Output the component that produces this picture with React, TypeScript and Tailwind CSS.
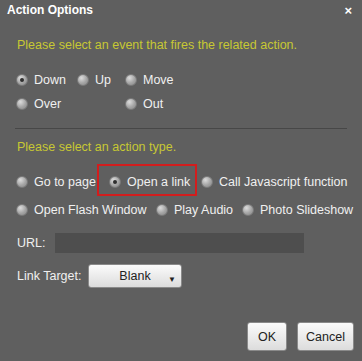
import React from "react";

function Radio({ checked = false }: { checked?: boolean }) {
  return (
    <span className="relative inline-flex h-[12px] w-[12px] shrink-0 items-center justify-center rounded-full border border-[#7a7a7a] bg-[radial-gradient(circle_at_35%_30%,#dcdcdc,#a4a4a4_55%,#858585)]">
      {checked && <span className="h-[4px] w-[4px] rounded-full bg-[#2e2e2e]" />}
    </span>
  );
}

function Option({ label, checked = false, className = "" }: { label: string; checked?: boolean; className?: string }) {
  return (
    <div className={`flex items-center gap-[6px] ${className}`}>
      <Radio checked={checked} />
      <span className="whitespace-nowrap">{label}</span>
    </div>
  );
}

const btn =
  "flex items-center justify-center rounded-[3px] border border-[#8a8a8a] bg-[linear-gradient(#fbfbfb,#dcdcdc)] text-[#222]";

export default function App() {
  return (
    <div className="relative flex h-[361px] w-[362px] flex-col bg-[#5f5f5f] font-['Liberation_Sans',Arial,sans-serif] text-[12.5px] leading-[16px] text-[#f0f0f0]">
      <div className="flex h-[20px] items-center justify-between pl-[7px] pr-[10px]">
        <span className="text-[12px] font-bold text-white">Action Options</span>
        <span className="text-[13px] font-bold leading-none text-white">×</span>
      </div>

      <div className="mt-[17px] pl-[17px] text-[#c7c833]">Please select an event that fires the related action.</div>

      <div className="mt-[19px] grid grid-cols-[61px_48px_auto] gap-y-[8px] pl-[16px]">
        <Option label="Down" checked />
        <Option label="Up" />
        <Option label="Move" />
        <Option label="Over" className="col-span-2" />
        <Option label="Out" />
      </div>

      <div className="mx-[15px] mt-[16px] h-px bg-[#474747]" />

      <div className="mt-[10px] pl-[17px] text-[#c7c833]">Please select an action type.</div>

      <div className="mt-[19px] flex flex-col gap-[12px] pl-[16px]">
        <div className="flex items-center">
          <Option label="Go to page" className="w-[93px]" />
          <div className="relative w-[92px]">
            <Option label="Open a link" checked />
            <div className="absolute -left-[12px] -top-[10px] h-[32px] w-[100px] border-2 border-[#d21d1d]" />
          </div>
          <Option label="Call Javascript function" />
        </div>
        <div className="flex items-center">
          <Option label="Open Flash Window" className="w-[140px]" />
          <Option label="Play Audio" className="w-[86px]" />
          <Option label="Photo Slideshow" />
        </div>
      </div>

      <div className="mt-[15px] flex items-center pl-[17px]">
        <span className="w-[38px]">URL:</span>
        <div className="h-[20px] w-[249px] bg-[#4e4e4e]" />
      </div>

      <div className="mt-[11px] flex items-center pl-[17px]">
        <span className="w-[71px]">Link Target:</span>
        <div className={`${btn} relative h-[24px] w-[94px]`}>
          <span>Blank</span>
          <span className="absolute bottom-[3px] right-[5px] text-[8px] leading-none">▼</span>
        </div>
      </div>

      <div className="mt-auto mb-[10px] flex justify-end gap-[10px] pr-[8px]">
        <div className={`${btn} h-[29px] w-[40px]`}>OK</div>
        <div className={`${btn} h-[29px] w-[57px]`}>Cancel</div>
      </div>
    </div>
  );
}
